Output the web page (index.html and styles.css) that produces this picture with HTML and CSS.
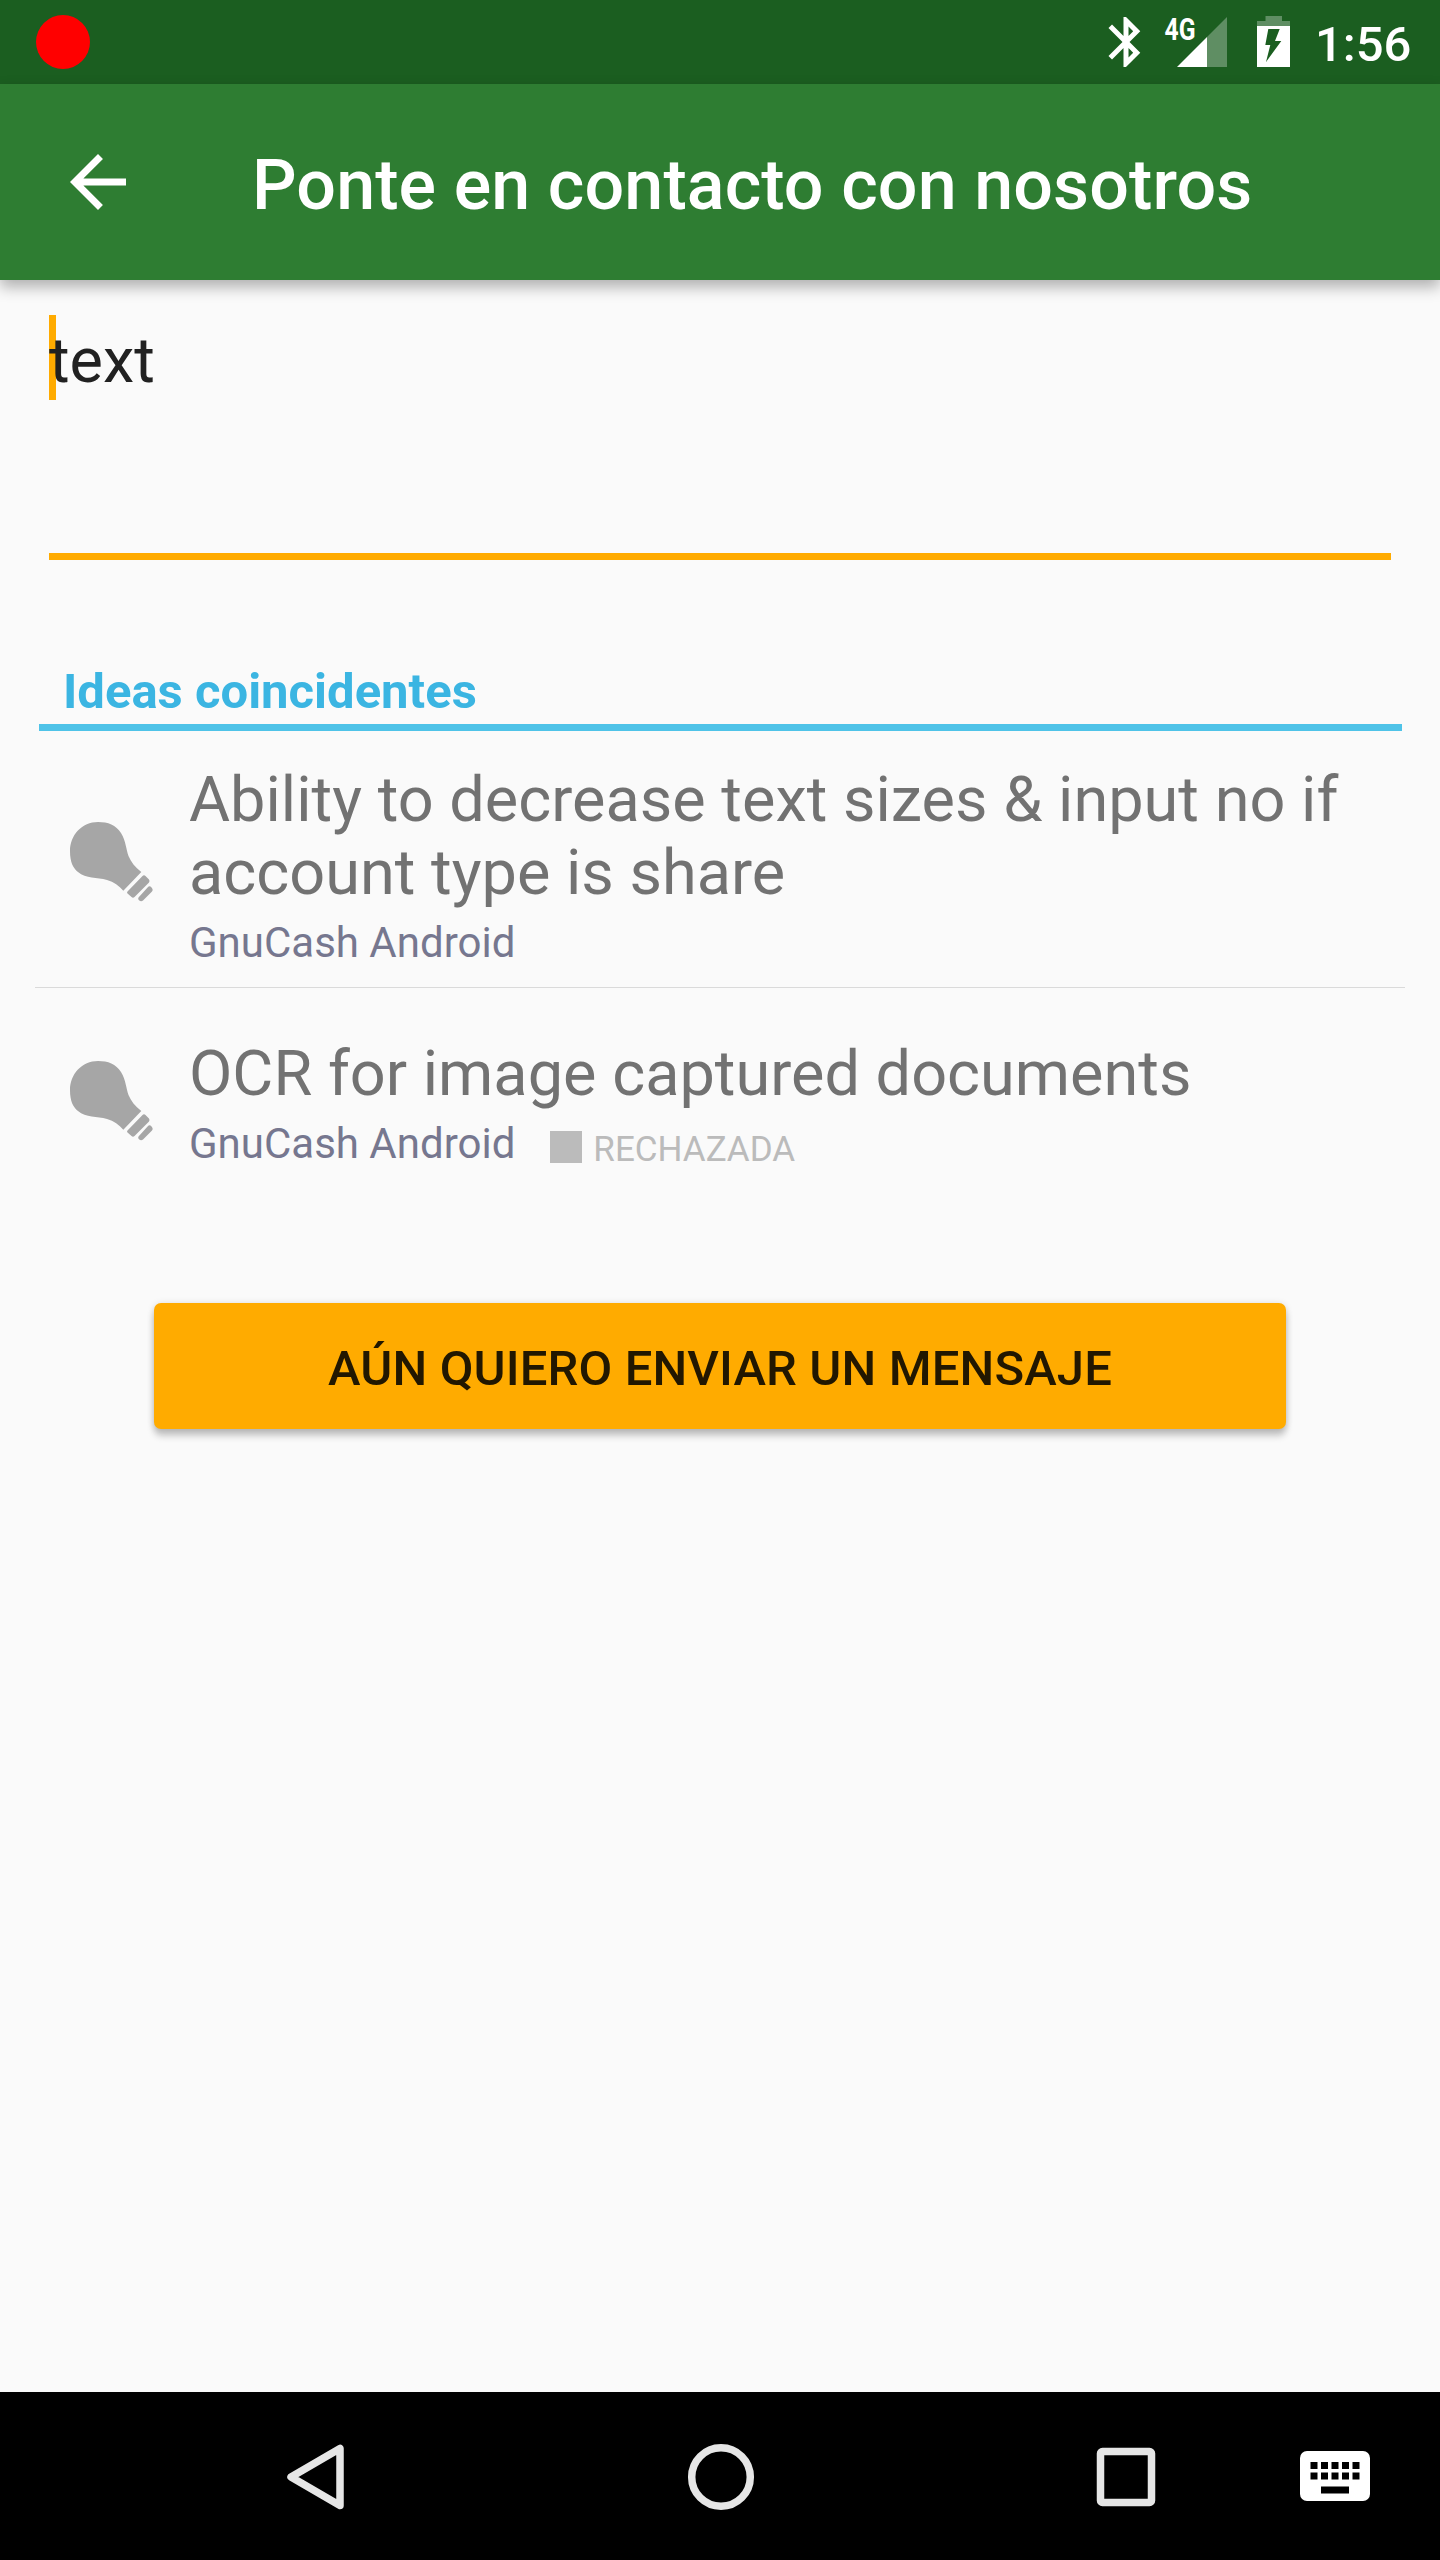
FILE: index.html
```html
<!DOCTYPE html>
<html lang="es">
<head>
<meta charset="utf-8">
<title>Ponte en contacto con nosotros</title>
<link rel="stylesheet" href="styles.css">
</head>
<body>
<div class="screen">
  <div class="status-bar">
    <span class="record-dot"></span>
    <div class="status-icons">
      <svg class="icon-bluetooth" viewBox="0 0 24 24"><path d="M17.71 7.71L12 2h-1v7.59L6.41 5 5 6.41 10.59 12 5 17.59 6.41 19 11 14.41V22h1l5.71-5.71-4.3-4.29 4.3-4.29zM13 5.83l1.88 1.88L13 9.59V5.83zm1.88 10.46L13 18.17v-3.76l1.88 1.88z"/></svg>
      <svg class="icon-signal" viewBox="0 0 63 84">
        <path class="dim" d="M63 17v50H43V37z"/>
        <path d="M43 37v30H13z"/>
        <text x="0.5" y="39.500" textLength="31" lengthAdjust="spacingAndGlyphs">4G</text>
      </svg>
      <svg class="icon-battery" viewBox="0 0 33 84">
        <path class="dim" d="M8.500 16H25v5h8v5H0v-5h8.500z"/>
        <path fill-rule="evenodd" d="M0 26h33v41H0zM11.300 29L8.300 45h5L9 62l15.300-21H18l4.700-12z"/>
      </svg>
      <span class="clock">1:56</span>
    </div>
  </div>
  <header class="app-bar">
    <svg class="icon-back" viewBox="0 0 24 24"><path d="M20 11H7.830l5.590-5.590L12 4l-8 8 8 8 1.410-1.410L7.830 13H20v-2z"/></svg>
    <h1 class="title">Ponte en contacto con nosotros</h1>
  </header>
  <main class="content">
    <div class="field"><span class="cursor"></span><span class="field-text">text</span></div>
    <h2 class="section-title">Ideas coincidentes</h2>
    <ul class="ideas">
      <li class="idea idea-tall">
        <svg class="icon-bulb" viewBox="0 0 84 82"><path d="M28 2C12 2 0 15 0 31C0 42 3 48 8 52C16 59 27 57 37 60C44 62 49 66 53.300 70.700L71.300 52C65 47 61 42 58.500 36C56 29 56 21 51 13C46 5 38 2 28 2z"/><path d="M57.500 71.500Q56.500 72.500 57.500 73.500L61.500 77Q63 78.500 64.500 77L79 62.500Q80 61 79 59.500L75.500 56Q74 54.500 72.500 56zM68.500 77.500Q67.500 79 69 80.200Q71 82 73 80.500L82 71.500Q83.500 70 82 68L80.500 66.500Q79 65.800 77.800 67.300z"/></svg>
        <div class="idea-body">
          <div class="idea-title">Ability to decrease text sizes &amp; input no if account type is share</div>
          <div class="idea-meta"><span class="forum">GnuCash Android</span></div>
        </div>
      </li>
      <li class="idea idea-short">
        <svg class="icon-bulb" viewBox="0 0 84 82"><path d="M28 2C12 2 0 15 0 31C0 42 3 48 8 52C16 59 27 57 37 60C44 62 49 66 53.300 70.700L71.300 52C65 47 61 42 58.500 36C56 29 56 21 51 13C46 5 38 2 28 2z"/><path d="M57.500 71.500Q56.500 72.500 57.500 73.500L61.500 77Q63 78.500 64.500 77L79 62.500Q80 61 79 59.500L75.500 56Q74 54.500 72.500 56zM68.500 77.500Q67.500 79 69 80.200Q71 82 73 80.500L82 71.500Q83.500 70 82 68L80.500 66.500Q79 65.800 77.800 67.300z"/></svg>
        <div class="idea-body">
          <div class="idea-title">OCR for image captured documents</div>
          <div class="idea-meta"><span class="forum">GnuCash Android</span><span class="state-swatch"></span><span class="state">RECHAZADA</span></div>
        </div>
      </li>
    </ul>
    <button class="send" type="button">AÚN QUIERO ENVIAR UN MENSAJE</button>
  </main>
  <nav class="nav-bar">
    <svg class="nav-back" viewBox="0 0 60 68"><path d="M54 5.500v57L5 34z"/></svg>
    <svg class="nav-home" viewBox="0 0 68 68"><circle cx="34" cy="34" r="29.300"/></svg>
    <svg class="nav-recent" viewBox="0 0 60 60"><rect x="4.500" y="4.500" width="51" height="51" rx="2"/></svg>
    <svg class="nav-keyboard" viewBox="0 0 70 50">
      <rect width="70" height="50" rx="7"/>
      <path class="keys" d="M10.500 11h7v7h-7zM21 11h7v7h-7zM31.500 11h7v7h-7zM42 11h7v7h-7zM52.500 11h7v7h-7zM10.500 21.500h7v7h-7zM21 21.500h7v7h-7zM31.500 21.500h7v7h-7zM42 21.500h7v7h-7zM52.500 21.500h7v7h-7zM21 35.500h28v7H21z"/>
    </svg>
  </nav>
</div>
</body>
</html>
```
FILE: styles.css
```css
* { box-sizing: border-box; }
body { margin: 0; background: #fafafa; font-family: Roboto, sans-serif; }
svg { display: block; flex: none; }
h1, h2, ul { margin: 0; padding: 0; list-style: none; }

.screen { display: flex; flex-direction: column; width: 1440px; height: 2560px; overflow: hidden; }

.status-bar { flex: none; display: flex; justify-content: space-between; align-items: center; height: 84px; padding: 0 30px 0 36px; background: #1b5e20; }
.record-dot { width: 54px; height: 54px; border-radius: 50%; background: #f00; }
.status-icons { display: flex; align-items: center; fill: #fff; }
.status-icons .dim { fill-opacity: .3; }
.icon-bluetooth { width: 60px; height: 60px; }
.icon-signal { width: 63px; height: 84px; margin-left: 8px; }
.icon-signal text { font-size: 31px; font-weight: 700; }
.icon-battery { width: 33px; height: 84px; margin-left: 30px; }
.clock { width: 95px; margin-left: 25px; padding-top: 4px; line-height: 57px; font-size: 49px; font-weight: 500; color: #fff; white-space: nowrap; }

.app-bar { flex: none; position: relative; display: flex; align-items: center; height: 196px; padding-left: 56px; background: #2e7d32; box-shadow: 0 7px 14px rgba(0, 0, 0, .3); }
.icon-back { width: 84px; height: 84px; fill: #fff; }
.title { margin-left: 112px; padding-top: 6px; font-size: 70px; line-height: 82px; font-weight: 500; letter-spacing: .1px; color: #fff; white-space: nowrap; }

.content { flex: 1; display: flex; flex-direction: column; padding: 35px 35px 0; }
.field { display: flex; height: 245px; margin: 0 14px; border-bottom: 7px solid #ffab00; }
.cursor { width: 7px; height: 85px; margin-right: -7px; background: #ffab00; }
.field-text { position: relative; padding-top: 9px; font-size: 63px; line-height: 73px; color: #212121; }

.section-title { margin: 103px 3.500px 0; padding: 0 24.500px 4px; border-bottom: 7px solid #4fc3e8; font-size: 49px; line-height: 57px; font-weight: 700; color: #3bb5e2; }
.idea { display: flex; padding-left: 35px; }
.idea-tall { height: 257px; border-bottom: 1px solid #dadada; }
.idea-short { height: 226px; }
.icon-bulb { width: 84px; height: 82px; fill: #a6a6a6; }
.idea-tall .icon-bulb { margin-top: 89px; }
.idea-short .icon-bulb { margin-top: 71px; }
.idea-body { margin-left: 35px; }
.idea-tall .idea-body { padding-top: 32px; }
.idea-short .idea-body { padding-top: 49px; }
.idea-title { font-size: 63px; line-height: 73px; letter-spacing: .02px; color: #727272; }
.idea-meta { display: flex; align-items: flex-start; margin-top: 9px; line-height: 49px; font-size: 42px; color: #76778f; }
.state-swatch { width: 32px; height: 32px; margin: 12px 11px 0 35px; background: #bbb; }
.state { padding-top: 10px; font-size: 35px; line-height: 41px; color: #bbb; }

.send { width: 1132px; height: 126px; margin: 89px 0 0 119px; padding: 5px 0 0; border: 0; border-radius: 7px; background: #ffab00; box-shadow: 0 7px 7px rgba(0, 0, 0, .2), 0 1px 7px rgba(0, 0, 0, .15); font-family: inherit; font-size: 49px; font-weight: 500; line-height: 57px; letter-spacing: .12px; color: #221700; }

.nav-bar { flex: none; display: flex; align-items: center; height: 168px; padding: 1px 0 0 286px; background: #000; fill: none; stroke: #e6e6e6; stroke-width: 7.500px; stroke-linejoin: round; }
.nav-back { width: 60px; height: 68px; }
.nav-home { width: 68px; height: 68px; margin-left: 340.500px; }
.nav-recent { width: 60px; height: 60px; margin-left: 341px; }
.nav-keyboard { width: 70px; height: 50px; margin: 0 0 1px 144.500px; fill: #fff; stroke: none; }
.nav-keyboard .keys { fill: #000; }
```
